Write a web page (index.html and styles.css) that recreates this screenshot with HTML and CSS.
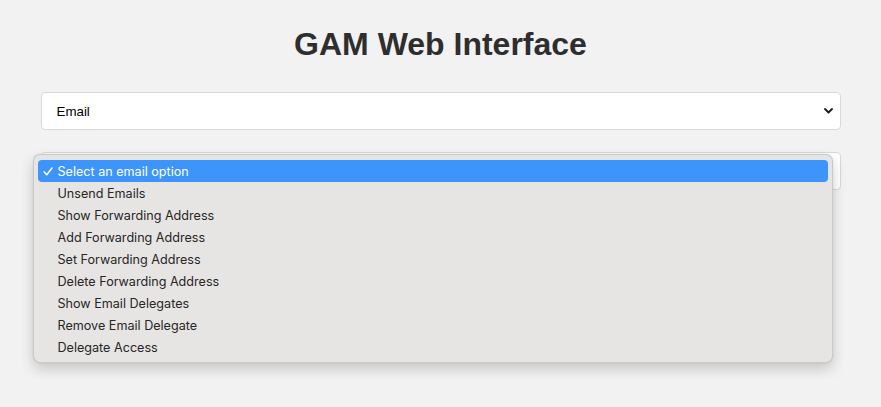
FILE: index.html
```html
<!DOCTYPE html>
<html lang="en">
<head>
<meta charset="utf-8">
<title>GAM Web Interface</title>
<link rel="stylesheet" href="styles.css">
</head>
<body>
<div class="container">
  <h1 class="title">GAM Web Interface</h1>
  <div class="field">
    <div class="select">
      <span class="select-value">Email</span>
      <svg class="chevron" width="9" height="6" viewBox="0 0 9 6"><path d="M1 1 L4.5 4.5 L8 1" fill="none" stroke="#1a1a1a" stroke-width="1.8" stroke-linecap="round" stroke-linejoin="round"/></svg>
    </div>
  </div>
  <div class="field field-open">
    <div class="select">
      <span class="select-value">Select an email option</span>
      <svg class="chevron" width="9" height="6" viewBox="0 0 9 6"><path d="M1 1 L4.5 4.5 L8 1" fill="none" stroke="#1a1a1a" stroke-width="1.8" stroke-linecap="round" stroke-linejoin="round"/></svg>
    </div>
    <ul class="menu">
      <li class="menu-item selected">
        <svg class="check" width="10" height="9" viewBox="0 0 10 9"><path d="M1 4.8 L3.8 7.8 L9 1" fill="none" stroke="#fff" stroke-width="1.5" stroke-linecap="round" stroke-linejoin="round"/></svg>
        Select an email option
      </li>
      <li class="menu-item">Unsend Emails</li>
      <li class="menu-item">Show Forwarding Address</li>
      <li class="menu-item">Add Forwarding Address</li>
      <li class="menu-item">Set Forwarding Address</li>
      <li class="menu-item">Delete Forwarding Address</li>
      <li class="menu-item">Show Email Delegates</li>
      <li class="menu-item">Remove Email Delegate</li>
      <li class="menu-item">Delegate Access</li>
    </ul>
  </div>
</div>
</body>
</html>
```
FILE: styles.css
```css
html, body {
  margin: 0;
  padding: 0;
  background: #f2f2f2;
}
body {
  font-family: "Liberation Sans", Arial, sans-serif;
  color: #333;
}
.container {
  max-width: 800px;
  margin: 0 auto;
  padding-top: 26px;
  padding-bottom: 190px;
}
.title {
  margin: 0 0 29px;
  font-size: 32px;
  line-height: 37px;
  font-weight: bold;
  text-align: center;
  color: #2e2e2e;
}
.field {
  margin-bottom: 22px;
}
.field-open {
  position: relative;
  margin-bottom: 0;
}
.select {
  box-sizing: border-box;
  height: 38px;
  background: #fff;
  border: 1px solid #d9d9d9;
  border-radius: 4px;
  display: flex;
  align-items: center;
  justify-content: space-between;
  padding: 0 7px 0 15px;
  font-size: 13.33px;
  color: #000;
}
.chevron {
  display: block;
}
.menu {
  position: absolute;
  left: -8px;
  top: 2px;
  width: 800px;
  box-sizing: border-box;
  margin: 0;
  padding: 5px 4px 4px;
  list-style: none;
  background: #e7e5e3;
  border: 1px solid rgba(0, 0, 0, 0.12);
  border-radius: 7px;
  box-shadow: 0 6px 14px rgba(0, 0, 0, 0.18), 0 0 2px rgba(0, 0, 0, 0.08);
  font-family: Inter, "Noto Sans", sans-serif;
  font-size: 12.6px;
  color: #262626;
}
.menu-item {
  position: relative;
  box-sizing: border-box;
  height: 22px;
  padding-top: 2px;
  line-height: 20px;
  padding-left: 20px;
  border-radius: 4px;
}
.menu-item.selected {
  background: #3d95fb;
  color: #fff;
}
.check {
  position: absolute;
  left: 5px;
  top: 7px;
}
```
